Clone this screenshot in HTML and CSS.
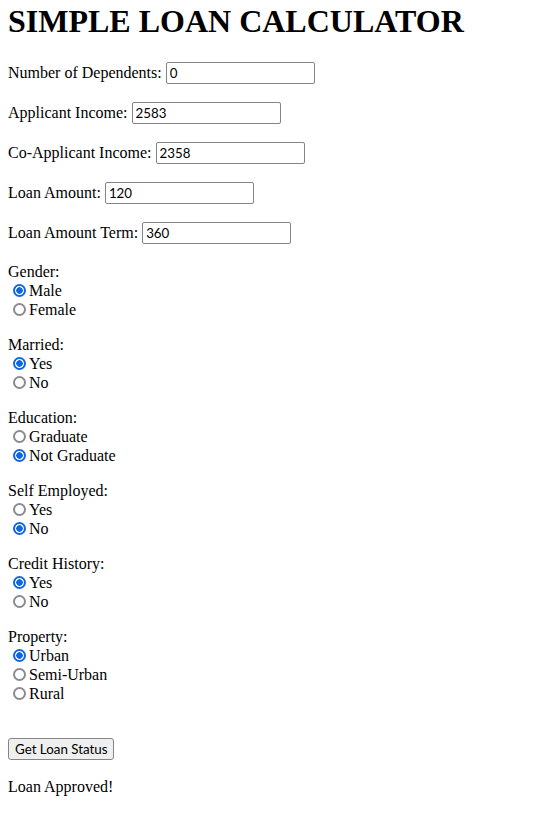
FILE: index.html
```html
<!DOCTYPE html>
<html>
<head>
<meta charset="utf-8">
<title>Simple Loan Calculator</title>
<link rel="stylesheet" href="styles.css">
</head>
<body>
<h1 class="title">SIMPLE LOAN CALCULATOR</h1>
<form class="form">
  <div class="field"><label for="dep">Number of Dependents:</label> <input class="text" id="dep" type="text" value="0"></div>
  <div class="field"><label for="inc">Applicant Income:</label> <input class="text" id="inc" type="text" value="2583"></div>
  <div class="field"><label for="coinc">Co-Applicant Income:</label> <input class="text" id="coinc" type="text" value="2358"></div>
  <div class="field"><label for="amt">Loan Amount:</label> <input class="text" id="amt" type="text" value="120"></div>
  <div class="field"><label for="term">Loan Amount Term:</label> <input class="text" id="term" type="text" value="360"></div>

  <div class="group">
    <div class="group-label">Gender:</div>
    <div class="opt"><input class="radio" type="radio" name="g" id="g1" checked><label for="g1">Male</label></div>
    <div class="opt"><input class="radio" type="radio" name="g" id="g2"><label for="g2">Female</label></div>
  </div>
  <div class="group">
    <div class="group-label">Married:</div>
    <div class="opt"><input class="radio" type="radio" name="m" id="m1" checked><label for="m1">Yes</label></div>
    <div class="opt"><input class="radio" type="radio" name="m" id="m2"><label for="m2">No</label></div>
  </div>
  <div class="group">
    <div class="group-label">Education:</div>
    <div class="opt"><input class="radio" type="radio" name="e" id="e1"><label for="e1">Graduate</label></div>
    <div class="opt"><input class="radio" type="radio" name="e" id="e2" checked><label for="e2">Not Graduate</label></div>
  </div>
  <div class="group">
    <div class="group-label">Self Employed:</div>
    <div class="opt"><input class="radio" type="radio" name="s" id="s1"><label for="s1">Yes</label></div>
    <div class="opt"><input class="radio" type="radio" name="s" id="s2" checked><label for="s2">No</label></div>
  </div>
  <div class="group">
    <div class="group-label">Credit History:</div>
    <div class="opt"><input class="radio" type="radio" name="c" id="c1" checked><label for="c1">Yes</label></div>
    <div class="opt"><input class="radio" type="radio" name="c" id="c2"><label for="c2">No</label></div>
  </div>
  <div class="group">
    <div class="group-label">Property:</div>
    <div class="opt"><input class="radio" type="radio" name="p" id="p1" checked><label for="p1">Urban</label></div>
    <div class="opt"><input class="radio" type="radio" name="p" id="p2"><label for="p2">Semi-Urban</label></div>
    <div class="opt"><input class="radio" type="radio" name="p" id="p3"><label for="p3">Rural</label></div>
  </div>

  <div class="actions"><button type="button" class="btn">Get Loan Status</button></div>
</form>
<p class="result">Loan Approved!</p>
</body>
</html>
```
FILE: styles.css
```css
html, body {
  background: #fff;
}
body {
  margin: 8px;
  font-family: "Liberation Serif", "Times New Roman", serif;
  font-size: 16px;
  color: #000;
}
.title {
  font-size: 32px;
  font-weight: bold;
  line-height: 37px;
  margin: -5px 0 22px;
}
.form {
  margin: 0;
}
.field {
  height: 24px;
  margin-bottom: 16px;
}
.text {
  font-family: Lato, "Noto Sans", sans-serif;
  font-size: 13.333px;
  width: 149px;
  box-sizing: border-box;
  height: 22px;
  padding: 1px 3px;
  border: 1px solid #858585;
  border-radius: 2px;
  color: #000;
}
.field:last-of-type {
  margin-bottom: 17px;
}
.group {
  margin-bottom: 16px;
}
.group-label {
  line-height: 19px;
}
.opt {
  display: flex;
  align-items: center;
  height: 19px;
}
.radio {
  appearance: none;
  -webkit-appearance: none;
  box-sizing: border-box;
  margin: 0 3px 0 5px;
  width: 13px;
  height: 13px;
  border: 2px solid #8a8a92;
  border-radius: 50%;
  background: #fff;
}
.radio:checked {
  border-color: #1068e0;
  background: radial-gradient(circle, #1068e0 0 3px, #fff 3.5px);
}
.actions {
  padding-top: 19px;
}
.btn {
  font-family: Lato, "Noto Sans", sans-serif;
  font-size: 13.333px;
  height: 22px;
  padding: 0 6px;
  white-space: nowrap;
  border: 1px solid #858585;
  border-radius: 3px;
  background: #efefef;
  color: #000;
}
.result {
  margin: 18px 0 16px;
}
```
